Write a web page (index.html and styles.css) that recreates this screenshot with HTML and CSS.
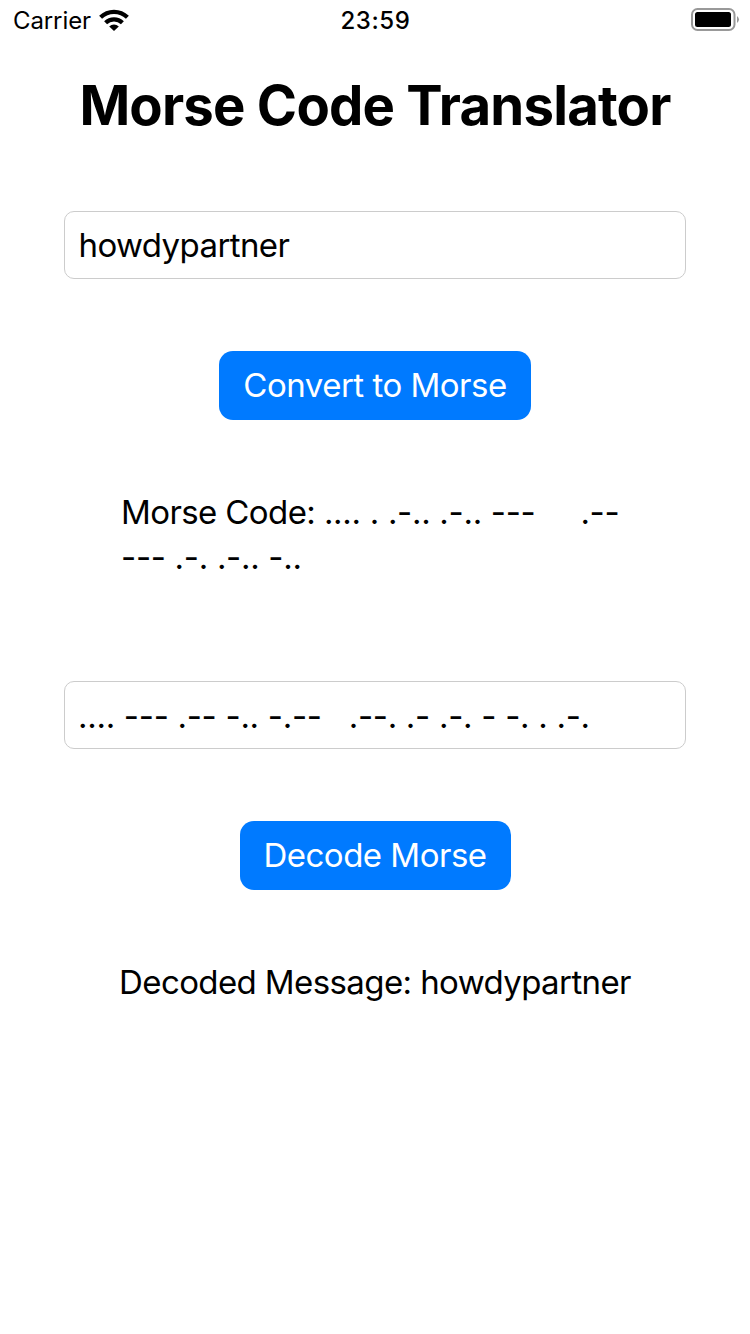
FILE: index.html
```html
<!DOCTYPE html>
<html lang="en">
<head>
<meta charset="utf-8">
<title>Morse Code Translator</title>
<link rel="stylesheet" href="styles.css">
</head>
<body>
<header class="status">
  <div class="carrier"><span class="carrier-name">Carrier</span>
    <svg class="wifi" width="30" height="22" viewBox="0 0 30 22"><g fill="none" stroke="#000" stroke-width="4.200"><path d="M1.600 8.300a19.200 19.200 0 0 1 26.800 0"/><path d="M6.600 13.800a12 12 0 0 1 16.800 0"/></g><path d="M15 22l-4.800-4.500a7 7 0 0 1 9.600 0z"/></svg>
  </div>
  <time class="clock">23:59</time>
  <svg class="battery" width="49" height="23" viewBox="0 0 49 23"><rect x="1" y="1" width="42.500" height="21" rx="5.500" fill="none" stroke="#999" stroke-width="2"/><rect x="4" y="4" width="36" height="15" rx="2.500"/><path d="M46 8q4 3.500 0 7z" fill="#999"/></svg>
</header>
<main class="screen">
  <h1 class="title">Morse Code Translator</h1>
  <div class="field">howdypartner</div>
  <button class="button convert">Convert to Morse</button>
  <p class="result morse">Morse Code: <span class="code">.... . .-.. .-.. ---     .--<br>--- .-. .-.. -..</span></p>
  <div class="field encoded">.... --- .-- -.. -.--   .--. .- .-. - -. . .-.</div>
  <button class="button decode">Decode Morse</button>
  <p class="result">Decoded Message: howdypartner</p>
</main>
</body>
</html>
```
FILE: styles.css
```css
* { box-sizing: border-box; }
body { margin: 0; background: #fff; color: #000; font-family: Inter, "Liberation Sans", sans-serif; font-size: 33px; letter-spacing: -0.6px; }
.status { display: grid; grid-template-columns: 1fr auto 1fr; align-items: center; height: 40px; padding: 0 10px 0 13px; font-size: 24px; letter-spacing: 0; }
.carrier { display: flex; align-items: center; gap: 8px; }
.carrier-name { letter-spacing: -0.1px; }
.clock { position: relative; left: -1px; font-weight: 500; letter-spacing: 0.6px; }
.battery { justify-self: end; margin-bottom: 1px; }
.screen { display: flex; flex-direction: column; align-items: center; }
.title { margin: 30px 0 0; height: 71px; line-height: 70px; font-size: 54.5px; font-weight: 700; letter-spacing: -0.8px; white-space: nowrap; }
.field { width: 622px; height: 68px; margin-top: 70px; padding: 0 14px 0 13.5px; border: 1px solid #ccc; border-radius: 10px; line-height: 67px; white-space: pre; }
.encoded { padding-top: 1px; padding-left: 13px; letter-spacing: -0.29px; }
.button { height: 69px; margin-top: 72px; padding: 0; border: 0; border-radius: 14px; background: #007aff; color: #fff; font: inherit; line-height: 69px; letter-spacing: -0.5px; white-space: nowrap; }
.convert { width: 312px; }
.decode { width: 271px; }
.result { margin: 70px 0 0; line-height: 45px; white-space: pre; }
.morse { width: 508px; height: 121px; }
.code { letter-spacing: -0.3px; }
```
